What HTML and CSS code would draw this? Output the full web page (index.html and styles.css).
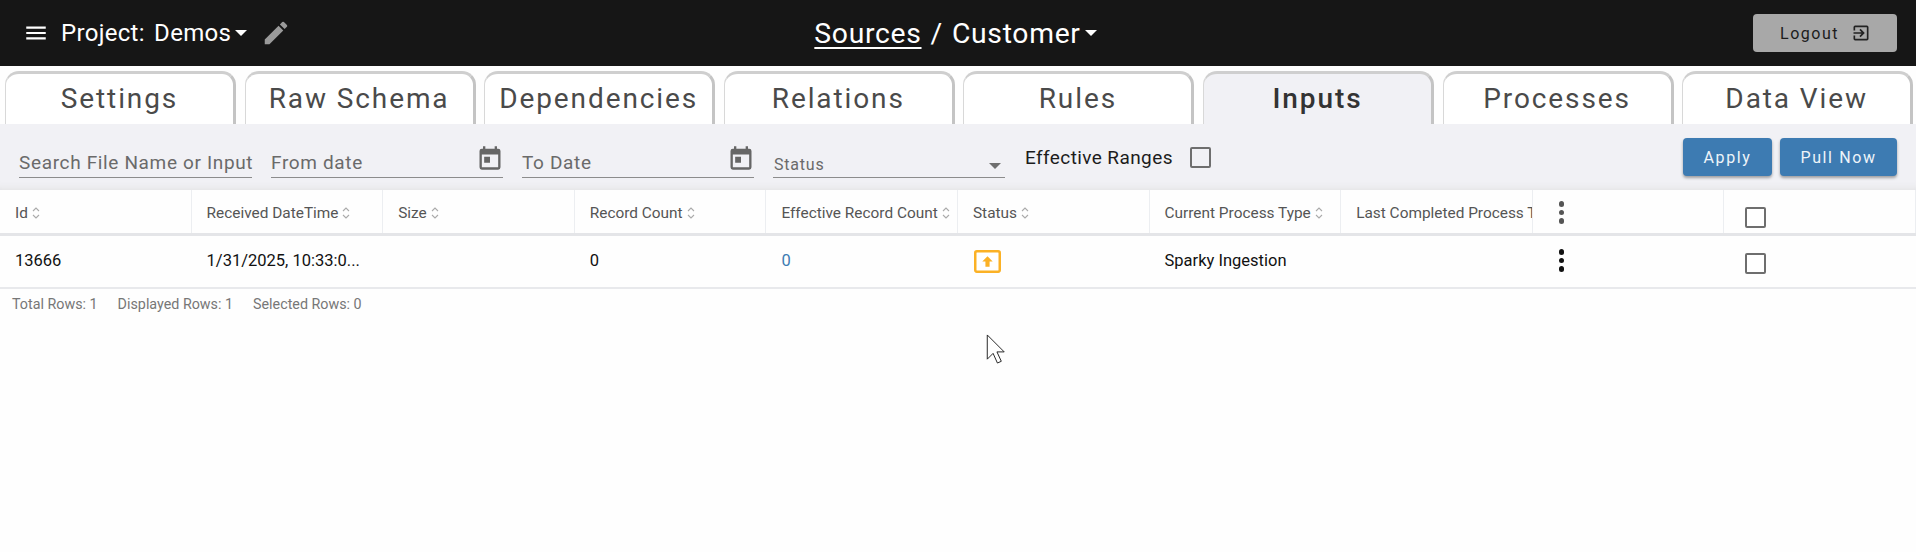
FILE: index.html
```html
<!DOCTYPE html>
<html lang="en">
<head>
<meta charset="utf-8">
<title>Customer Inputs</title>
<link rel="stylesheet" href="styles.css">
</head>
<body>
<header class="topbar">
  <div class="top-left">
    <svg class="menu-icon" viewBox="0 0 24 24"><path d="M3 18h18v-2H3v2zm0-5h18v-2H3v2zm0-7v2h18V6H3z"/></svg>
    <span class="project"><span class="project-label">Project:</span> Demos</span>
    <span class="caret"></span>
    <svg class="edit-icon" viewBox="0 0 24 24"><path d="M3 17.25V21h3.75L17.81 9.94l-3.75-3.75L3 17.25zM20.71 7.04a1 1 0 0 0 0-1.41l-2.34-2.34a1 1 0 0 0-1.41 0l-1.83 1.83 3.75 3.75 1.83-1.83z"/></svg>
  </div>
  <div class="top-center">
    <a class="crumb-link">Sources</a><span class="crumb-sep">/</span><span>Customer</span><span class="caret"></span>
  </div>
  <button class="logout">Logout
    <svg class="logout-icon" viewBox="0 0 24 24"><path d="M10.09 15.59 11.5 17l5-5-5-5-1.41 1.41L12.67 11H3v2h9.67l-2.58 2.59zM19 3H5a2 2 0 0 0-2 2v4h2V5h14v14H5v-4H3v4a2 2 0 0 0 2 2h14a2 2 0 0 0 2-2V5a2 2 0 0 0-2-2z"/></svg>
  </button>
</header>

<nav class="tabs">
  <div class="tab">Settings</div>
  <div class="tab">Raw Schema</div>
  <div class="tab">Dependencies</div>
  <div class="tab">Relations</div>
  <div class="tab">Rules</div>
  <div class="tab tab-active">Inputs</div>
  <div class="tab">Processes</div>
  <div class="tab">Data View</div>
</nav>

<section class="filters">
  <div class="field field-search"><span class="field-text">Search File Name or Input</span></div>
  <div class="field field-date">
    <span class="field-text">From date</span>
    <svg class="cal-icon" viewBox="0 0 24 24"><path d="M19 4h-1V2h-2v2H8V2H6v2H5a2 2 0 0 0-2 2v14a2 2 0 0 0 2 2h14a2 2 0 0 0 2-2V6a2 2 0 0 0-2-2zm0 16H5V9h14v11zM7 11h5v5H7z"/></svg>
  </div>
  <div class="field field-date">
    <span class="field-text">To Date</span>
    <svg class="cal-icon" viewBox="0 0 24 24"><path d="M19 4h-1V2h-2v2H8V2H6v2H5a2 2 0 0 0-2 2v14a2 2 0 0 0 2 2h14a2 2 0 0 0 2-2V6a2 2 0 0 0-2-2zm0 16H5V9h14v11zM7 11h5v5H7z"/></svg>
  </div>
  <div class="field field-status">
    <span class="field-text-small">Status</span>
    <span class="select-caret"></span>
  </div>
  <div class="effective">
    <span>Effective Ranges</span>
    <span class="checkbox"></span>
  </div>
  <div class="actions">
    <button class="btn btn-apply">Apply</button>
    <button class="btn btn-pull">Pull Now</button>
  </div>
</section>

<section class="grid">
  <div class="row head">
    <div class="cell"><span class="head-label">Id</span><svg class="sort" viewBox="0 0 8 14"><path d="M1 5l3-3 3 3M1 9l3 3 3-3"/></svg></div>
    <div class="cell"><span class="head-label">Received DateTime</span><svg class="sort" viewBox="0 0 8 14"><path d="M1 5l3-3 3 3M1 9l3 3 3-3"/></svg></div>
    <div class="cell"><span class="head-label">Size</span><svg class="sort" viewBox="0 0 8 14"><path d="M1 5l3-3 3 3M1 9l3 3 3-3"/></svg></div>
    <div class="cell"><span class="head-label">Record Count</span><svg class="sort" viewBox="0 0 8 14"><path d="M1 5l3-3 3 3M1 9l3 3 3-3"/></svg></div>
    <div class="cell"><span class="head-label">Effective Record Count</span><svg class="sort" viewBox="0 0 8 14"><path d="M1 5l3-3 3 3M1 9l3 3 3-3"/></svg></div>
    <div class="cell"><span class="head-label">Status</span><svg class="sort" viewBox="0 0 8 14"><path d="M1 5l3-3 3 3M1 9l3 3 3-3"/></svg></div>
    <div class="cell"><span class="head-label">Current Process Type</span><svg class="sort" viewBox="0 0 8 14"><path d="M1 5l3-3 3 3M1 9l3 3 3-3"/></svg></div>
    <div class="cell"><span class="head-label head-clip">Last Completed Process Type</span></div>
    <div class="cell"><span class="dots dots-head"><i></i><i></i><i></i></span></div>
    <div class="cell"><span class="checkbox checkbox-grid"></span></div>
  </div>
  <div class="row body-row">
    <div class="cell">13666</div>
    <div class="cell">1/31/2025, 10:33:0...</div>
    <div class="cell"></div>
    <div class="cell">0</div>
    <div class="cell link">0</div>
    <div class="cell">
      <svg class="status-icon" viewBox="0 0 26 22"><rect x="1.2" y="1.2" width="23.6" height="19.6" rx="1.5"/><path d="M13 6l5 5h-3v5h-4v-5H8z"/></svg>
    </div>
    <div class="cell">Sparky Ingestion</div>
    <div class="cell"></div>
    <div class="cell"><span class="dots"><i></i><i></i><i></i></span></div>
    <div class="cell"><span class="checkbox checkbox-grid"></span></div>
  </div>
  <footer class="summary">
    <span>Total Rows: 1</span><span>Displayed Rows: 1</span><span>Selected Rows: 0</span>
  </footer>
</section>

<svg class="cursor" viewBox="0 0 19 31"><path d="M1 1v25l6-6 4.5 10 4-1.800-4.500-9.700h7.500z"/></svg>
</body>
</html>
```

FILE: styles.css
```css
* { box-sizing: border-box; }
html, body { margin: 0; height: 100%; }
body {
  position: relative;
  overflow: hidden;
  background: #fefefe;
  font-family: Roboto, "Liberation Sans", sans-serif;
  color: #111;
}

/* Top bar */
.topbar {
  height: 66px;
  background: #161616;
  color: #fff;
  display: grid;
  grid-template-columns: 1fr auto 1fr;
  align-items: center;
  padding: 0 19px 0 24px;
}
.top-left { display: flex; align-items: center; font-size: 24px; }
.menu-icon { width: 26px; height: 26px; fill: #fff; margin-right: 12px; margin-left: -1px; }
.project { letter-spacing: .3px; white-space: nowrap; }
.project-label { margin-right: 3px; }
.caret {
  display: inline-block;
  width: 0; height: 0;
  margin-left: 4px;
  border: 6px solid transparent;
  border-top-color: #fff;
  border-bottom: 0;
}
.edit-icon { width: 30px; height: 30px; fill: #9a9a9a; margin-left: 14px; }
.top-center { display: flex; align-items: center; font-size: 28.300px; letter-spacing: .7px; margin-left: -10px; }
.crumb-link { text-decoration: underline; text-underline-offset: 4px; }
.crumb-sep { margin: 0 9px; }
.logout {
  justify-self: end;
  width: 144px; height: 38px;
  padding-left: 7px;
  display: flex; align-items: center; justify-content: center; gap: 12px;
  background: #a8a8a8;
  color: #1c1c1c;
  border: 0; border-radius: 4px;
  font: 400 16px Roboto, sans-serif;
  letter-spacing: 1.500px;
}
.logout-icon { width: 20px; height: 20px; fill: #222; }

/* Tabs */
.tabs {
  display: grid;
  grid-template-columns: repeat(8, 231px);
  column-gap: 8.600px;
  height: 58px;
  padding: 5px 0 0 5px;
}
.tab {
  background: #fff;
  border-radius: 14px 14px 0 0;
  border-top: 3px solid #cfcfcf;
  border-left: 1px solid #d8d8d8;
  border-right: 3px solid #c4c4c4;
  text-align: center;
  font-size: 28px;
  line-height: 49px;
  letter-spacing: 1.900px;
  color: #4a4a4a;
  white-space: nowrap;
}
.tab-active { background: #f1f1f5; color: #333; font-weight: 500; }

/* Filters */
.filters {
  height: 66px;
  background: #f1f1f5;
  display: flex;
  align-items: flex-start;
  padding: 0 19px 0 19px;
  box-shadow: inset 0 -8px 8px -8px #ddd;
}
.field {
  position: relative;
  height: 27px;
  margin-top: 27px;
  border-bottom: 1px solid #8c8c8c;
  margin-right: 19px;
  display: flex; align-items: center; justify-content: space-between;
  color: #6a6a6a;
}
.field-search { width: 233px; }
.field-date { width: 232px; }
.field-status { width: 232px; }
.field-text { font-size: 19px; letter-spacing: .65px; white-space: nowrap; margin-top: -3px; }
.field-text-small { font-size: 16px; letter-spacing: .8px; margin-left: 1px; }
.cal-icon { width: 28px; height: 28px; fill: #666; margin-top: -12px; margin-right: -1px; }
.select-caret {
  width: 0; height: 0; margin-right: 4px; margin-top: 3px;
  border: 6px solid transparent; border-top: 6px solid #6f6f6f; border-bottom: 0;
}
.effective {
  display: flex; align-items: center; gap: 17px;
  margin-top: 22px; margin-left: 1px;
  font-size: 19px; letter-spacing: .4px; color: #1c1c1c;
}
.checkbox {
  display: inline-block;
  width: 21px; height: 21px;
  border: 2.500px solid #6e6e6e;
  border-radius: 2px;
  background: #fff;
}
.effective .checkbox { background: transparent; }
.actions { margin-left: auto; margin-top: 14px; display: flex; gap: 8px; }
.btn {
  height: 38px;
  background: #3d7bb2;
  color: #eef4f9;
  border: 0; border-radius: 4px;
  font: 400 16px Roboto, sans-serif;
  letter-spacing: 1.600px;
  box-shadow: 0 2px 3px rgba(0,0,0,.35);
}
.btn-apply { width: 89px; }
.btn-pull { width: 117px; }

/* Grid */
.row { display: grid; grid-template-columns: repeat(10, 191.600px); }
.head { height: 46px; border-bottom: 3px solid #e4e5e8; color: #555; font-size: 15.400px; }
.head .cell { border-right: 1px solid #eceef1; padding-top: 2px; }
.cell {
  display: flex; align-items: center;
  padding-left: 15px;
  overflow: hidden;
  white-space: nowrap;
}
.head-label { flex: none; }
.head-clip { color: #555; }
.sort { width: 8px; height: 14px; flex: none; margin-left: 4px; fill: none; stroke: #aaa; stroke-width: 1.100; }
.body-row { height: 53px; border-bottom: 2px solid #e8e9ec; font-size: 16.500px; }
.body-row .cell { padding-bottom: 2px; }
.link { color: #3d7bb2; }
.status-icon { width: 27px; height: 23px; margin: 2px 0 0 1px; }
.status-icon rect { fill: #fff; stroke: #fbb125; stroke-width: 2.400; }
.status-icon path { fill: #fbb125; }
.dots { display: flex; flex-direction: column; gap: 3px; margin-left: 11px; }
.dots i { width: 5.500px; height: 5.500px; border-radius: 50%; background: #111; }
.dots-head i { background: #555; }
.checkbox-grid { margin-left: 6px; }
.head .checkbox-grid { margin-top: 10px; }
.body-row .checkbox-grid { margin-top: 5px; }
.summary {
  display: flex; gap: 20px;
  padding: 7px 0 0 12px;
  font-size: 14.300px; color: #777;
}

/* Mouse pointer captured in the screenshot */
.cursor {
  position: absolute;
  left: 986px; top: 334px;
  width: 19px; height: 30px;
  fill: #fff; stroke: #222; stroke-width: 1;
}
```
